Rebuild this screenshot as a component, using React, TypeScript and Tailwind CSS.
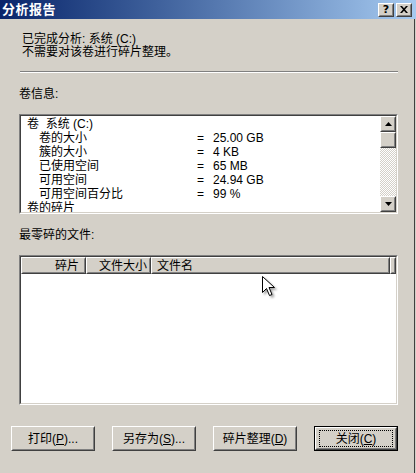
import React from 'react';

const face = "font-['Liberation_Sans','Noto_Sans_CJK_SC',sans-serif]";

const Sunken: React.FC<{ className?: string; children?: React.ReactNode }> = ({ className = '', children }) => (
  <div className={`border border-t-[#808080] border-l-[#808080] border-b-white border-r-white ${className}`}>
    <div className="w-full h-full border border-t-[#404040] border-l-[#404040] border-b-[#d4d0c8] border-r-[#d4d0c8] bg-white overflow-hidden">
      {children}
    </div>
  </div>
);

const Raised: React.FC<{ className?: string; children?: React.ReactNode }> = ({ className = '', children }) => (
  <div className={`border border-t-white border-l-white border-b-[#404040] border-r-[#404040] bg-[#d4d0c8] ${className}`}>
    <div className="w-full h-full border border-t-[#d4d0c8] border-l-[#d4d0c8] border-b-[#808080] border-r-[#808080] flex items-center justify-center">
      {children}
    </div>
  </div>
);

const Arrow: React.FC<{ down?: boolean }> = ({ down }) => (
  <svg width="7" height="4" viewBox="0 0 7 4">
    {down ? <path d="M0 0h7L3.5 4z" fill="#000" /> : <path d="M3.5 0L7 4H0z" fill="#000" />}
  </svg>
);

const volumeRows = [
  { label: '卷的大小', value: '25.00 GB' },
  { label: '簇的大小', value: '4 KB' },
  { label: '已使用空间', value: '65 MB' },
  { label: '可用空间', value: '24.94 GB' },
  { label: '可用空间百分比', value: '99 %' },
];

const Btn: React.FC<{ label: string; hot: string; tail?: string; isDefault?: boolean }> = ({ label, hot, tail = '', isDefault }) => {
  const inner = (
    <span className="text-[12px] text-black leading-none">
      {label}(<span className="underline underline-offset-1">{hot}</span>){tail}
    </span>
  );
  if (isDefault) {
    return (
      <div className="w-[84px] h-[25px] border border-black">
        <Raised className="w-full h-full">
          <div className="w-[74px] h-[17px] border border-dotted border-black flex items-center justify-center">{inner}</div>
        </Raised>
      </div>
    );
  }
  return <Raised className="w-[84px] h-[25px]">{inner}</Raised>;
};

export default function App() {
  return (
    <div className={`w-[416px] h-[473px] bg-[#d4d0c8] relative overflow-hidden flex flex-col ${face}`}>
      {/* title bar */}
      <div className="h-[19px] shrink-0 flex items-center justify-between bg-gradient-to-r from-[#0a246a] to-[#a6caf0] pl-[2px] pr-[4px]">
        <span className="text-white font-bold text-[13px] leading-none tracking-[0.5px]">分析报告</span>
        <div className="flex gap-[2px]">
          <Raised className="w-[16px] h-[14px]">
            <span className="text-[11px] font-bold leading-none font-['DejaVu_Sans',sans-serif]">?</span>
          </Raised>
          <Raised className="w-[16px] h-[14px]">
            <svg width="8" height="7" viewBox="0 0 8 7">
              <path d="M0 0h2l2 2.3L6 0h2L5 3.5 8 7H6L4 4.7 2 7H0l3-3.5z" fill="#000" />
            </svg>
          </Raised>
        </div>
      </div>

      <div className="flex flex-1 min-h-0">
        <div className="flex-1 flex flex-col pl-[19px] pr-[16px] text-[12px] text-black">
          <div className="pt-[14px] pl-[3px] leading-[13px]">
            <div>已完成分析: 系统 (C:)</div>
            <div>不需要对该卷进行碎片整理。</div>
          </div>
          <div className="mt-[12px] ml-[1px] h-[2px] border-t border-t-[#808080] border-b border-b-white" />

          <div className="mt-[15px] leading-[13px]">卷信息:</div>

          <Sunken className="mt-[13px] h-[100px]">
            <div className="flex h-full">
              <div className="flex-1 pt-[1px] pl-[6px] leading-[14px]">
                <div>卷 &nbsp;系统 (C:)</div>
                {volumeRows.map((r) => (
                  <div key={r.label} className="flex">
                    <span className="w-[170px] pl-[12px]">{r.label}</span>
                    <span className="w-[16px]">=</span>
                    <span>{r.value}</span>
                  </div>
                ))}
                <div>卷的碎片</div>
              </div>
              <div className="w-[16px] h-full flex flex-col bg-[repeating-conic-gradient(#d4d0c8_0_25%,#ffffff_0_50%)] bg-[length:2px_2px]">
                <Raised className="w-[16px] h-[16px]"><Arrow /></Raised>
                <Raised className="w-[16px] h-[16px]" />
                <div className="flex-1" />
                <Raised className="w-[16px] h-[16px]"><Arrow down /></Raised>
              </div>
            </div>
          </Sunken>

          <div className="mt-[15px] leading-[13px]">最零碎的文件:</div>

          <Sunken className="mt-[13px] h-[150px]">
            <div className="flex h-[17px]">
              <Raised className="w-[65px] h-full">
                <div className="w-full text-right pr-[5px] leading-none">碎片</div>
              </Raised>
              <Raised className="w-[65px] h-full">
                <div className="w-full text-right pr-[2px] leading-none">文件大小</div>
              </Raised>
              <Raised className="w-[239px] h-full">
                <div className="w-full text-left pl-[4px] leading-none">文件名</div>
              </Raised>
              <Raised className="flex-1 h-full" />
            </div>
          </Sunken>

          <div className="mt-[21px] flex gap-[17px] -ml-[8px]">
            <Btn label="打印" hot="P" tail="..." />
            <Btn label="另存为" hot="S" tail="..." />
            <Btn label="碎片整理" hot="D" />
            <Btn label="关闭" hot="C" isDefault />
          </div>
        </div>
        <div className="w-[1px] bg-[#404040]" />
        <div className="w-[1px]" />
      </div>

      {/* mouse pointer */}
      <svg className="absolute left-[262px] top-[276px] drop-shadow-[2px_2px_1px_rgba(0,0,0,0.35)]" width="13" height="21" viewBox="0 0 13 21">
        <path d="M0.5 0.5v16l4-4 3 7 2.5-1-3-7h5.5z" fill="#fff" stroke="#000" strokeWidth="1" />
      </svg>
    </div>
  );
}
